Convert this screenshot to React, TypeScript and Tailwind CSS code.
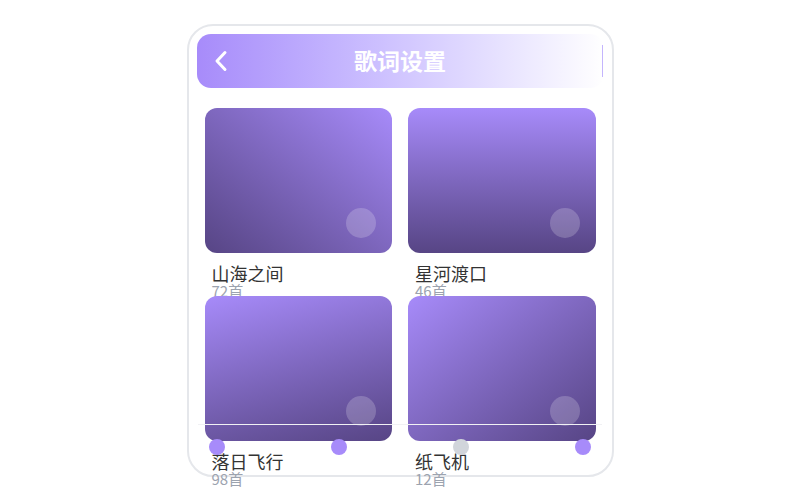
import React from "react";

const cards = [
  { title: "山海之间", count: "72首", grad: "bg-linear-to-tr from-[#574585] to-[#a78bfa]" },
  { title: "星河渡口", count: "46首", grad: "bg-linear-to-b from-[#a78bfa] to-[#574585]" },
  { title: "落日飞行", count: "98首", grad: "bg-linear-165 from-[#a78bfa] to-[#574585]" },
  { title: "纸飞机", count: "12首", grad: "bg-linear-to-br from-[#a78bfa] to-[#574585]" },
];

export default function App() {
  return (
    <div
      className="w-[800px] h-[500px] bg-white flex items-center justify-center"
      style={{ fontFamily: '"Noto Sans CJK SC", "Noto Sans", sans-serif' }}
    >
      <div className="relative w-[427px] h-[453px] border-2 border-[#e5e7eb] rounded-[26px] pt-2">
        <div className="relative mx-2 h-[54px] rounded-[14px] bg-linear-to-r from-[#a78bfa] to-white flex items-center">
          <svg width="14" height="22" viewBox="0 0 14 22" className="ml-[17px]" fill="none">
            <path d="M11 2.5 L3 11 L11 19.5" stroke="white" strokeWidth="3" strokeLinecap="round" strokeLinejoin="round" />
          </svg>
          <div className="absolute inset-0 flex items-center justify-center text-white text-[23px] font-bold">
            歌词设置
          </div>
          <div className="absolute right-[1px] top-[11px] h-8 w-px bg-[#c4b5fd]" />
        </div>
        <div className="mt-5 px-4 grid grid-cols-2 gap-x-4">
          {cards.map((c) => (
            <div key={c.title} className="h-[188px]">
              <div className={`relative h-[145px] rounded-xl ${c.grad}`}>
                <div className="absolute right-4 bottom-[15px] w-[30px] h-[30px] rounded-full bg-white/20" />
              </div>
              <div className="mt-[11px] pl-[7px]">
                <div className="text-[18px] leading-[19px] text-[#333333]">{c.title}</div>
                <div className="text-[15px] leading-[15px] text-[#9ca3af]">{c.count}</div>
              </div>
            </div>
          ))}
        </div>
        <div className="absolute left-[9px] top-[398px] w-[404px] h-px bg-[#f1f1f4]" />
        <div className="absolute left-[20px] top-[413px] w-[382px] flex justify-between">
          <div className="w-4 h-4 rounded-full bg-[#a78bfa]" />
          <div className="w-4 h-4 rounded-full bg-[#a78bfa]" />
          <div className="w-4 h-4 rounded-full bg-[#d1d5db]" />
          <div className="w-4 h-4 rounded-full bg-[#a78bfa]" />
        </div>
      </div>
    </div>
  );
}
